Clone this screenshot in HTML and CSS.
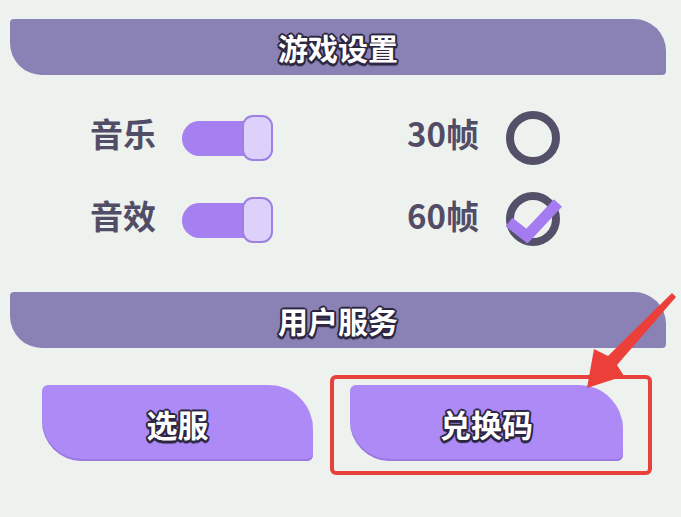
FILE: index.html
```html
<!DOCTYPE html>
<html lang="zh">
<head>
    <meta charset="UTF-8">
    <meta name="viewport" content="width=device-width, initial-scale=1.0">
    <title>设置</title>
    <link rel="stylesheet" href="styles.css">
</head>
<body>
    <div class="panel">
        <div class="bar"><span class="outlined">游戏设置</span></div>

        <div class="settings">
            <div class="row">
                <div class="opt opt-left">
                    <span class="label">音乐</span>
                    <div class="toggle"><span class="track"></span><span class="knob"></span></div>
                </div>
                <div class="opt">
                    <span class="label">30帧</span>
                    <svg class="radio" viewBox="0 0 54 54">
                        <circle cx="27" cy="27" r="23" fill="none" stroke="#545069" stroke-width="8"/>
                    </svg>
                </div>
            </div>
            <div class="row">
                <div class="opt opt-left">
                    <span class="label">音效</span>
                    <div class="toggle"><span class="track"></span><span class="knob"></span></div>
                </div>
                <div class="opt">
                    <span class="label">60帧</span>
                    <svg class="radio" viewBox="0 0 54 54">
                        <circle cx="27" cy="26" r="23" fill="none" stroke="#545069" stroke-width="8"/>
                        <polyline points="3,29 21,43 52,10" fill="none" stroke="#a47cf0" stroke-width="11"/>
                    </svg>
                </div>
            </div>
        </div>

        <div class="bar bar-second"><span class="outlined">用户服务</span></div>

        <div class="actions">
            <button class="btn btn-server"><span class="outlined">选服</span></button>
            <div class="highlight">
                <button class="btn"><span class="outlined">兑换码</span></button>
            </div>
        </div>

        <!-- annotation arrow -->
        <svg class="arrow" viewBox="0 0 681 517">
            <polygon points="587,388 594,349 608,356 672,293 676,297 617,365 624,376" fill="#ec3f3a"/>
        </svg>
    </div>
</body>
</html>
```

FILE: styles.css
```css
body {
    margin: 0;
    background: #eef2ee;
    font-family: "Noto Sans CJK SC", "Noto Sans", sans-serif;
}
.panel {
    position: relative;
    width: 681px;
    height: 517px;
    padding: 19px 15px 0 10px;
    box-sizing: border-box;
}
.bar {
    height: 56px;
    display: flex;
    align-items: center;
    justify-content: center;
    background: #8a81b4;
    border-radius: 4px 32px 4px 32px;
}
.bar-second {
    margin-top: 45px;
}
.outlined {
    color: #fff;
    font-weight: 700;
    font-size: 30px;
    text-shadow:
        2px 0 0 #2c2640, -2px 0 0 #2c2640, 0 2px 0 #2c2640, 0 -2px 0 #2c2640,
        1.5px 1.5px 0 #2c2640, -1.5px 1.5px 0 #2c2640, 1.5px -1.5px 0 #2c2640, -1.5px -1.5px 0 #2c2640,
        0 3px 1px #2c2640;
}
.settings {
    margin-top: 36px;
    padding-left: 80px;
    display: flex;
    flex-direction: column;
    gap: 28px;
}
.row {
    display: flex;
    align-items: center;
    height: 54px;
}
.opt {
    display: flex;
    align-items: center;
    gap: 27px;
}
.opt-left {
    width: 317px;
    gap: 26px;
}
.label {
    color: #524d66;
    font-size: 33px;
    font-weight: 700;
    line-height: 1;
    margin-bottom: 9px;
}
.toggle {
    display: flex;
    align-items: center;
}
.track {
    width: 66px;
    height: 35px;
    background: #a67ff1;
    border-radius: 18px 0 0 18px;
}
.knob {
    width: 27px;
    height: 42px;
    margin-left: -6px;
    background: #ddd1fc;
    border: 2px solid #9d80e2;
    border-radius: 11px;
}
.radio {
    width: 54px;
    height: 54px;
    overflow: visible;
}
.actions {
    margin-top: 27px;
    padding-left: 32px;
    display: flex;
    align-items: flex-start;
    gap: 17px;
}
.btn {
    width: 273px;
    height: 76px;
    border: none;
    padding: 0;
    background: #ad8af6;
    border-radius: 6px 44px 6px 40px;
    box-shadow: inset 0 -2px 0 #9a7ae0;
    font-family: inherit;
}
.btn .outlined {
    font-size: 31px;
}
.btn-server {
    width: 271px;
    margin-top: 10px;
}
.highlight {
    border: 4px solid #e8413b;
    border-radius: 6px;
    padding: 6px 25px 10px 16px;
}
.arrow {
    position: absolute;
    left: 0;
    top: 0;
    width: 681px;
    height: 517px;
    pointer-events: none;
}
```
